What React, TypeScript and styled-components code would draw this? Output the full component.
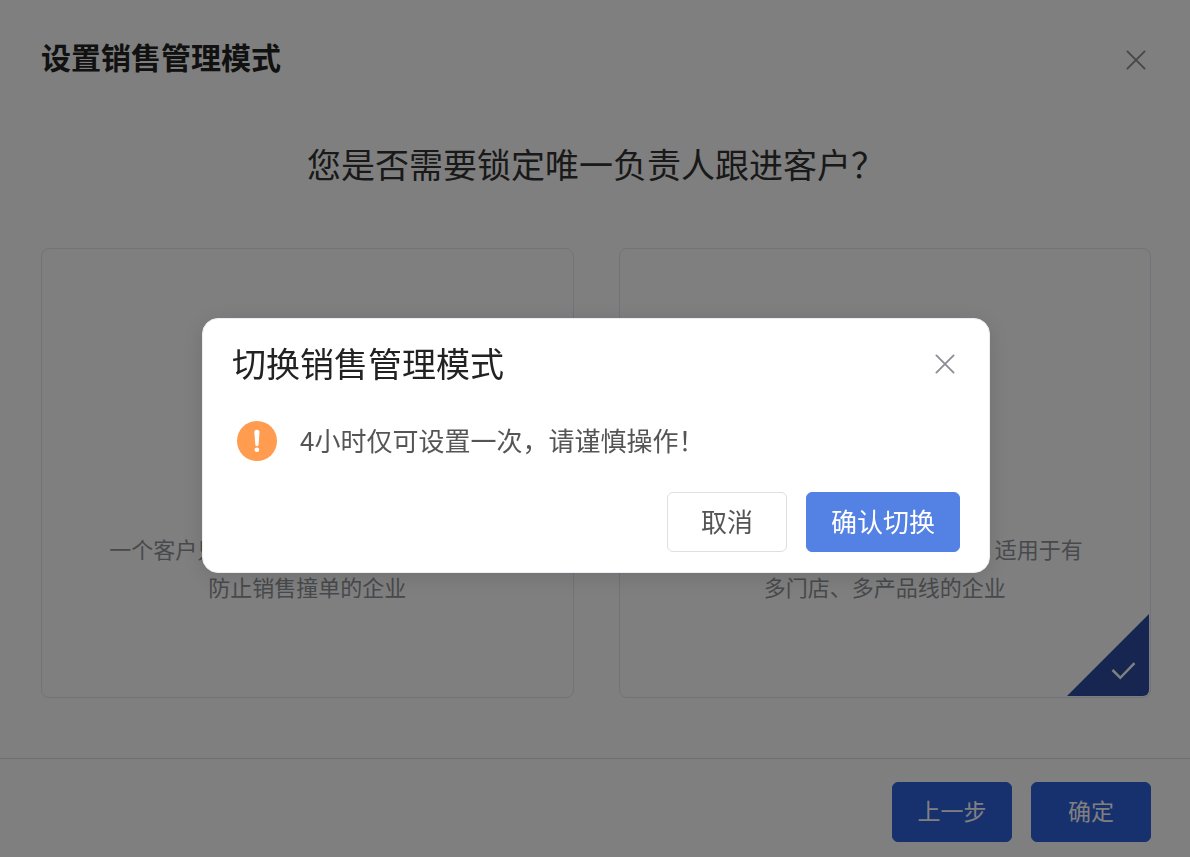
import React, { useState } from "react";
import styled, { createGlobalStyle } from "styled-components";

const GlobalStyle = createGlobalStyle`
  *, *::before, *::after { box-sizing: border-box; }
  body {
    margin: 0;
    background: #fff;
    font-family: "Noto Sans CJK SC", sans-serif;
  }
  h1, h2, p { margin: 0; }
  button { font-family: inherit; cursor: pointer; }
`;

const Page = styled.div`
  display: flex;
  flex-direction: column;
  min-height: 100vh;
`;

const Header = styled.header`
  display: flex;
  align-items: center;
  justify-content: space-between;
  padding: 34px 42px 0 41px;
`;

const PageTitle = styled.h1`
  padding-bottom: 8px;
  font-size: 30px;
  line-height: 44px;
  font-weight: 700;
  color: #222;
`;

const CloseButton = styled.button`
  display: flex;
  align-items: center;
  justify-content: center;
  width: 24px;
  height: 24px;
  padding: 0;
  border: 0;
  background: none;
  color: #8c8f96;
`;

const Main = styled.main`
  flex: 1;
  padding: 53px 39px 60px 41px;
`;

const Question = styled.h2`
  font-size: 34px;
  line-height: 50px;
  font-weight: 400;
  text-align: center;
  color: #333;
`;

const Cards = styled.div`
  display: grid;
  grid-template-columns: 1fr 1fr;
  gap: 45px;
  margin-top: 59px;
`;

const Card = styled.button`
  position: relative;
  display: flex;
  align-items: flex-end;
  justify-content: center;
  min-height: 450px;
  padding: 0 56px 92px;
  border: 1px solid #e4e4f4;
  border-radius: 8px;
  background: none;
  font-size: 22px;
  line-height: 38px;
  color: #909399;
`;

const Corner = styled.svg`
  position: absolute;
  right: 1px;
  bottom: 1px;
`;

const Footer = styled.footer`
  display: flex;
  justify-content: flex-end;
  gap: 19px;
  padding: 23px 39px 15px;
  border-top: 1px solid #dcdcdc;
`;

const Button = styled.button<{ $kind: "step" | "plain" | "confirm" }>`
  min-width: 120px;
  height: 60px;
  padding: 0 24px ${({ $kind }) => ($kind === "step" ? 4 : 2)}px;
  border-radius: 6px;
  border: 1px solid
    ${({ $kind }) => ({ step: "#2e60dc", plain: "#dcdfe6", confirm: "#5481e4" })[$kind]};
  background: ${({ $kind }) => ({ step: "#2e60dc", plain: "#fff", confirm: "#5481e4" })[$kind]};
  color: ${({ $kind }) => ($kind === "plain" ? "#555" : "#fff")};
  font-size: ${({ $kind }) => ($kind === "step" ? 23 : 26)}px;
  line-height: 38px;
`;

const Overlay = styled.div`
  position: fixed;
  inset: 0;
  display: flex;
  align-items: center;
  justify-content: center;
  padding: 34px 0 0 2px;
  background: rgba(0, 0, 0, 0.5);
`;

const Dialog = styled.section`
  width: 788px;
  max-width: 92%;
  padding: 19px 29px 20px;
  border: 1px solid #ebeef5;
  border-radius: 16px;
  background: #fff;
  box-shadow: 0 4px 24px rgba(0, 0, 0, 0.12);
`;

const DialogHeader = styled.div`
  display: flex;
  align-items: center;
  justify-content: space-between;
  padding-right: 3px;
`;

const DialogTitle = styled.h2`
  padding-bottom: 2px;
  font-size: 34px;
  line-height: 50px;
  font-weight: 400;
  color: #222;
`;

const Message = styled.div`
  display: flex;
  align-items: center;
  gap: 23px;
  margin-top: 31px;
  padding-left: 5px;
  font-size: 26px;
  line-height: 38px;
  color: #555;
`;

const MessageText = styled.p`
  padding-bottom: 2px;
`;

const Actions = styled.div`
  display: flex;
  justify-content: flex-end;
  gap: 19px;
  margin-top: 31px;
`;

const Cross = () => (
  <svg width="20" height="20" viewBox="0 0 20 20" fill="none" stroke="currentColor" strokeWidth="1.9" strokeLinecap="round" aria-hidden="true">
    <path d="M1.4 1.4 18.6 18.6M18.6 1.4 1.4 18.6" />
  </svg>
);

const Warning = () => (
  <svg width="40" height="40" viewBox="0 0 40 40" aria-hidden="true">
    <circle cx="20" cy="20" r="20" fill="#ff9c50" />
    <path d="M17.3 11.300a2.600 2.600 0 0 1 5.200 0L21.600 23.500a1.650 1.650 0 0 1-3.300 0z" fill="#fff" />
    <circle cx="19.900" cy="28.800" r="2.300" fill="#fff" />
  </svg>
);

const SelectedCorner = () => (
  <Corner width="82" height="82" viewBox="0 0 82 82" aria-hidden="true">
    <path d="M0 82 82 0V76a6 6 0 0 1-6 6z" fill="#2c4ca2" />
    <path d="m45.500 56 7.800 7.800 14.200-14.600" fill="none" stroke="#fff" strokeWidth="2.500" />
  </Corner>
);

const modes = [
  { id: "single", lines: ["一个客户只能由一个负责人跟进，适用于", "防止销售撞单的企业"] },
  { id: "multiple", lines: ["一个客户可由多个负责人跟进，适用于有", "多门店、多产品线的企业"] },
];

export default function App() {
  const [selected, setSelected] = useState("multiple");
  const [confirming, setConfirming] = useState(true);
  const close = () => setConfirming(false);

  return (
    <>
      <GlobalStyle />
      <Page>
        <Header>
          <PageTitle>设置销售管理模式</PageTitle>
          <CloseButton type="button" aria-label="关闭">
            <Cross />
          </CloseButton>
        </Header>
        <Main>
          <Question>您是否需要锁定唯一负责人跟进客户？</Question>
          <Cards>
            {modes.map(({ id, lines }) => (
              <Card key={id} type="button" aria-pressed={selected === id} onClick={() => setSelected(id)}>
                <span>
                  {lines[0]}
                  <br />
                  {lines[1]}
                </span>
                {selected === id && <SelectedCorner />}
              </Card>
            ))}
          </Cards>
        </Main>
        <Footer>
          <Button type="button" $kind="step">上一步</Button>
          <Button type="button" $kind="step" onClick={() => setConfirming(true)}>确定</Button>
        </Footer>
      </Page>
      {confirming && (
        <Overlay>
          <Dialog role="dialog" aria-modal="true" aria-labelledby="dialog-title">
            <DialogHeader>
              <DialogTitle id="dialog-title">切换销售管理模式</DialogTitle>
              <CloseButton type="button" aria-label="关闭" onClick={close}>
                <Cross />
              </CloseButton>
            </DialogHeader>
            <Message>
              <Warning />
              <MessageText>4小时仅可设置一次，请谨慎操作！</MessageText>
            </Message>
            <Actions>
              <Button type="button" $kind="plain" onClick={close}>取消</Button>
              <Button type="button" $kind="confirm" onClick={close}>确认切换</Button>
            </Actions>
          </Dialog>
        </Overlay>
      )}
    </>
  );
}
